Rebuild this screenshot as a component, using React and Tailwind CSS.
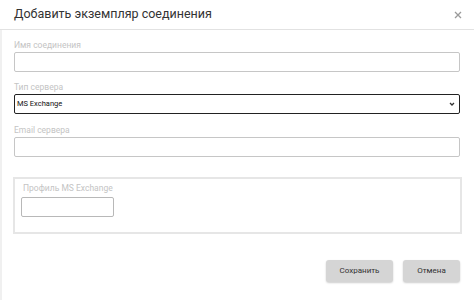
import React from 'react';

export default function App() {
  const label = 'text-[8.5px] leading-[12px] text-[#c4c4c4] mb-[1px]';
  return (
    <div className="w-[474px] h-[300px] bg-white overflow-hidden" style={{ fontFamily: 'Roboto, "Liberation Sans", sans-serif' }}>
      <div className="flex items-center justify-between h-[30px] pl-[14px] pr-[12px] border-b border-[#e2e2e2]">
        <span className="text-[12.5px] text-[#333]">Добавить экземпляр соединения</span>
        <svg width="8" height="8" viewBox="0 0 8 8" className="text-[#9a9a9a]">
          <path d="M1 1L7 7M7 1L1 7" stroke="currentColor" strokeWidth="1.3" />
        </svg>
      </div>
      <div className="flex h-[270px]">
        <div className="w-[2px] bg-[#f0f0f0]" />
        <div className="flex-1 pl-[12px] pr-[14px] pt-[9px]">
          <div className={label}>Имя соединения</div>
          <div className="h-[20px] border border-[#c6c6c6] rounded-[2px] mb-[9px]" />
          <div className={label}>Тип сервера</div>
          <div className="flex items-center justify-between h-[20px] border border-[#222] rounded-[2px] pl-[2px] pr-[4px] mb-[10px]">
            <span className="text-[7.5px] text-[#111]">MS Exchange</span>
            <svg width="6" height="4" viewBox="0 0 6 4">
              <path d="M1 1L3 3L5 1" fill="none" stroke="#333" strokeWidth="1.3" />
            </svg>
          </div>
          <div className={label}>Email сервера</div>
          <div className="h-[20px] border border-[#c6c6c6] rounded-[2px] mb-[20px]" />
          <div className="h-[57px] border-2 border-[#e6e6e6] ml-[-1px] mr-[-2px] pl-[6px] pt-[3px]">
            <div className="text-[8.5px] leading-[12px] text-[#c4c4c4] mb-[3px] pl-[2px]">Профиль MS Exchange</div>
            <div className="w-[93px] h-[20px] border border-[#b8b8b8] rounded-[2px]" />
          </div>
          <div className="flex justify-end gap-[10px] mt-[26px]">
            <button className="w-[67px] h-[22px] rounded-[3px] bg-[#d5d5d5] text-[8px] text-[#333] shadow-[0_1px_2px_rgba(0,0,0,0.2)]">Сохранить</button>
            <button className="w-[57px] h-[22px] rounded-[3px] bg-[#d5d5d5] text-[8px] text-[#333] shadow-[0_1px_2px_rgba(0,0,0,0.2)]">Отмена</button>
          </div>
        </div>
      </div>
    </div>
  );
}
